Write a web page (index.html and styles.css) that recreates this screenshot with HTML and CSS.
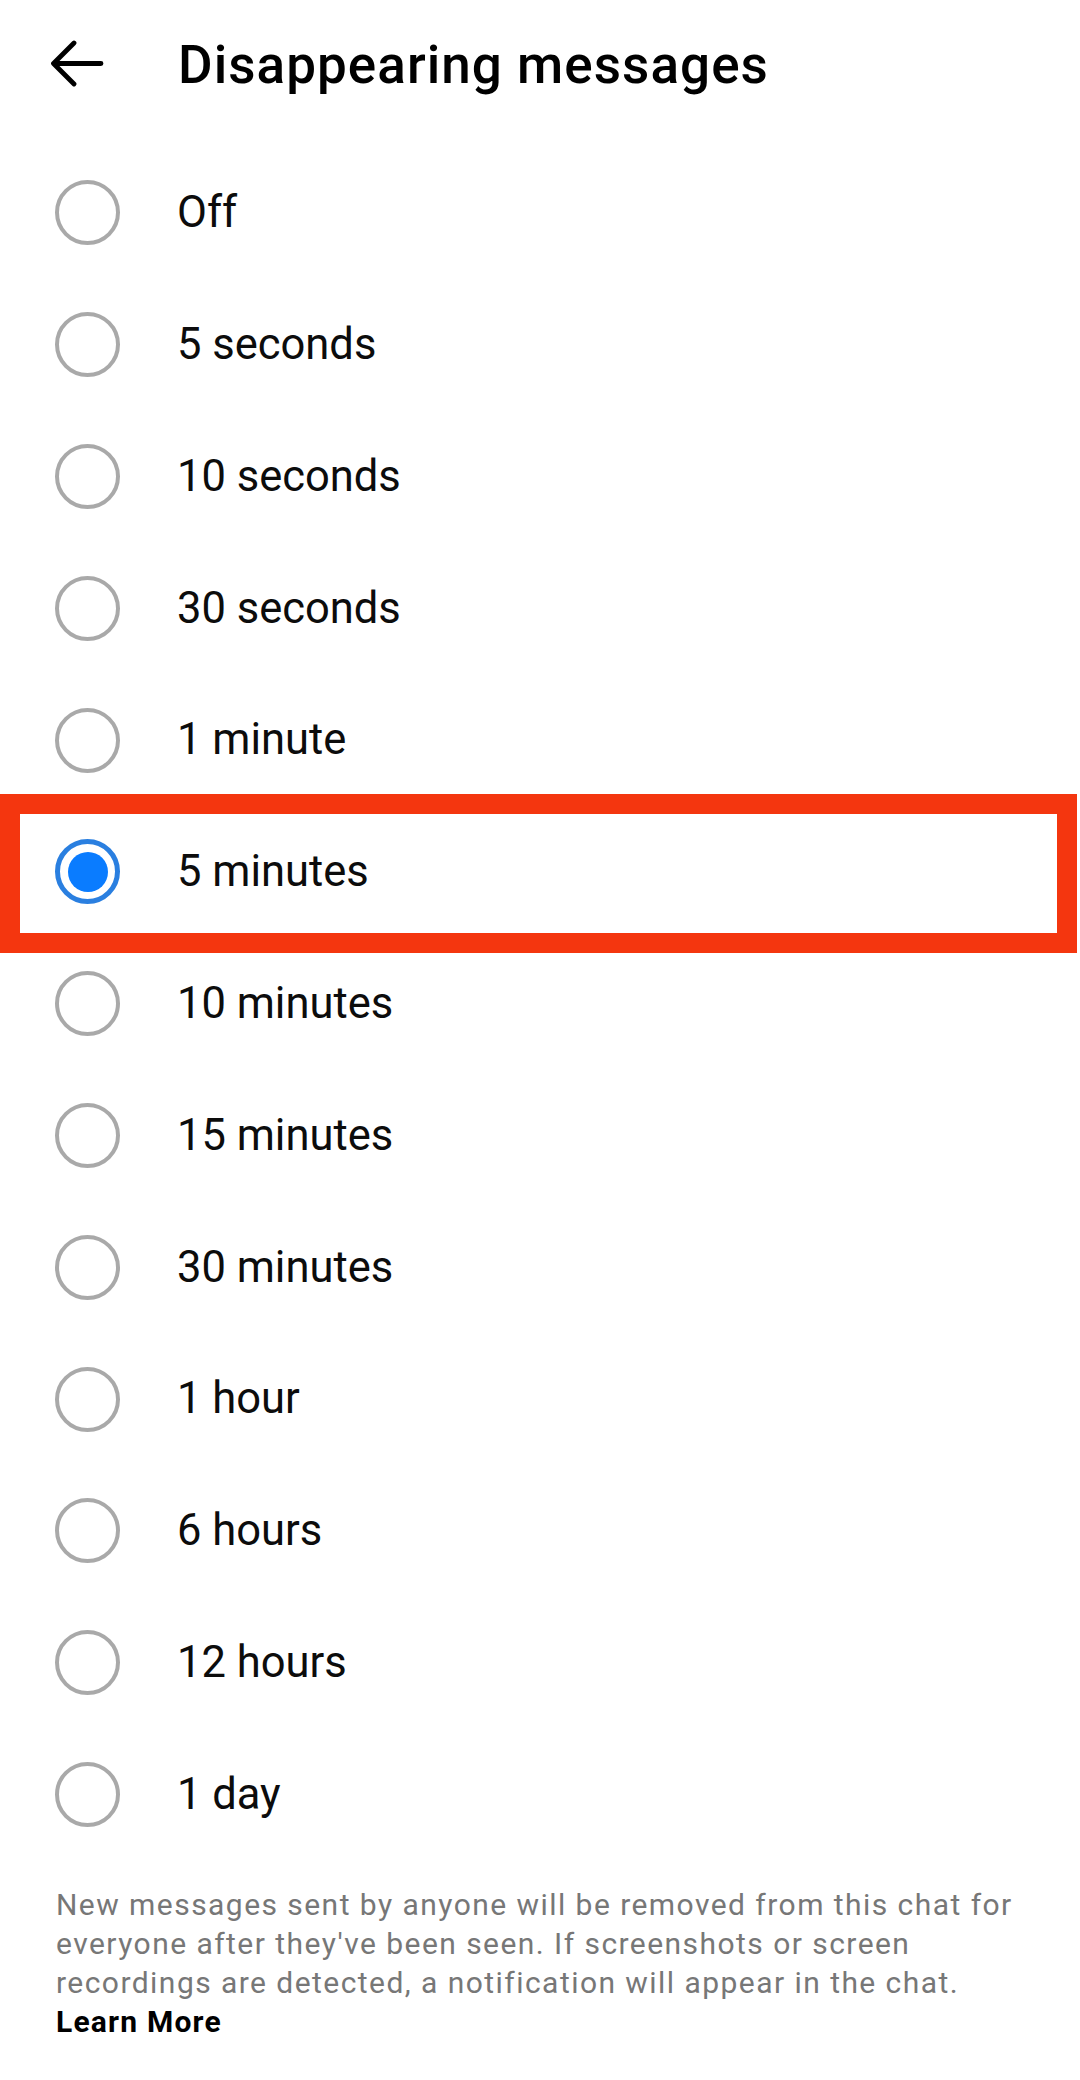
FILE: index.html
```html
<!DOCTYPE html>
<html lang="en">
<head>
<meta charset="utf-8">
<title>Disappearing messages</title>
<link rel="stylesheet" href="styles.css">
</head>
<body>
<div class="screen">
  <header class="header">
    <svg class="back" width="56" height="50" viewBox="0 0 56 50" aria-hidden="true">
      <path d="M51 23.5 H5 M24 3 L3.5 23.5 L24 44" fill="none" stroke="#000" stroke-width="4.8" stroke-linecap="round" stroke-linejoin="round"/>
    </svg>
    <h1 class="title">Disappearing messages</h1>
  </header>
  <ul class="options">
    <li class="option"><span class="radio"></span><span class="label">Off</span></li>
    <li class="option"><span class="radio"></span><span class="label">5 seconds</span></li>
    <li class="option"><span class="radio"></span><span class="label">10 seconds</span></li>
    <li class="option"><span class="radio"></span><span class="label">30 seconds</span></li>
    <li class="option"><span class="radio"></span><span class="label">1 minute</span></li>
    <li class="option selected highlighted"><span class="radio checked"></span><span class="label">5 minutes</span></li>
    <li class="option"><span class="radio"></span><span class="label">10 minutes</span></li>
    <li class="option"><span class="radio"></span><span class="label">15 minutes</span></li>
    <li class="option"><span class="radio"></span><span class="label">30 minutes</span></li>
    <li class="option"><span class="radio"></span><span class="label">1 hour</span></li>
    <li class="option"><span class="radio"></span><span class="label">6 hours</span></li>
    <li class="option"><span class="radio"></span><span class="label">12 hours</span></li>
    <li class="option"><span class="radio"></span><span class="label">1 day</span></li>
  </ul>
  <p class="note">New messages sent by anyone will be removed from this chat for everyone after they've been seen. If screenshots or screen recordings are detected, a notification will appear in the chat. <a class="learn" href="#">Learn More</a></p>
</div>
</body>
</html>
```
FILE: styles.css
```css
* { box-sizing: border-box; }
html, body {
  margin: 0;
  padding: 0;
  background: #fff;
}
body {
  font-family: Roboto, "Liberation Sans", sans-serif;
  color: #000;
  width: 1080px;
  height: 2080px;
  overflow: hidden;
}
.screen {
  width: 1080px;
}
.header {
  height: 130px;
  display: flex;
  align-items: center;
  padding-left: 50px;
}
.back {
  display: block;
  flex: none;
}
.title {
  margin: 0 0 0 72px;
  font-size: 53px;
  font-weight: 500;
  letter-spacing: 1.05px;
  color: #000;
  line-height: 1;
}
.options {
  list-style: none;
  margin: 0;
  padding: 17px 0 0 0;
}
.option {
  position: relative;
  height: 131.8px;
  display: flex;
  align-items: center;
  padding-left: 55px;
}
.radio {
  flex: none;
  width: 65px;
  height: 65px;
  border-radius: 50%;
  border: 4.5px solid #a9a9a9;
  display: flex;
  align-items: center;
  justify-content: center;
}
.radio.checked {
  border: 5px solid #2a7fe0;
}
.radio.checked::before {
  content: "";
  width: 40px;
  height: 40px;
  border-radius: 50%;
  background: #0a7cff;
}
.label {
  margin-left: 57px;
  font-size: 43.5px;
  color: #0c0c0c;
  line-height: 1;
}
.highlighted::after {
  content: "";
  position: absolute;
  left: 0;
  right: 3px;
  top: -12px;
  bottom: -15px;
  border: 20px solid #f4360f;
  pointer-events: none;
}
.note {
  margin: 0;
  padding: 26px 20px 0 56px;
  font-size: 30px;
  letter-spacing: 1.45px;
  line-height: 38.8px;
  color: #777;
}
.learn {
  display: block;
  color: #000;
  font-weight: 700;
  letter-spacing: 1.2px;
  text-decoration: none;
}
```
